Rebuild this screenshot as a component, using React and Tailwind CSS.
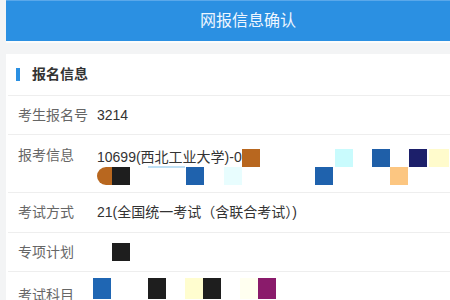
import React from "react";

const Block = ({ c, className = "" }) => (
    <span className={`inline-block w-[18px] h-[18px] ${c} ${className}`} />
);

const Row = ({ label, children, className = "" }) => (
    <div className={`flex items-center ml-[2px] pl-[10px] border-b border-[#eeeeee] ${className}`}>
        <div className="w-[79px] shrink-0 text-[14px] text-[#666]">{label}</div>
        <div className="flex-1 text-[14px] text-[#333]">{children}</div>
    </div>
);

const App = () => {
    return (
        <div
            className="w-[450px] h-[300px] overflow-hidden bg-[#f3f4f5]"
            style={{ fontFamily: '"Liberation Sans", "Noto Sans CJK SC", sans-serif' }}
        >
            <div className="ml-[6px] h-[41px] bg-[#2b90e2] border-t border-[#5aa8ea] flex items-center justify-center pl-[40px]">
                <span className="text-[16px] text-[#eef6ff]">网报信息确认</span>
            </div>
            <div className="ml-[6px] h-[2px] bg-[#fbfcfc]" />
            <div className="ml-[6px] mt-[11px] bg-white">
                <div className="h-[42px] flex items-center ml-[2px] pl-[8px] border-b border-[#eeeeee]">
                    <span className="w-[4px] h-[13px] bg-[#2b90e2] mr-[12px]" />
                    <span className="text-[14px] font-bold text-[#333]">报名信息</span>
                </div>
                <Row label="考生报名号" className="h-[39px]">3214</Row>
                <div className="flex items-start ml-[2px] pl-[10px] border-b border-[#eeeeee] h-[58px] pt-[11px]">
                    <div className="w-[79px] shrink-0 text-[14px] text-[#666] leading-[19px]">报考信息</div>
                    <div className="flex-1">
                        <div className="flex items-end h-[21px]">
                            <span className="relative text-[14px] text-[#333] leading-[19px]">
                                10699(西北工业大学)-0
                                <span className="absolute left-[51px] bottom-[-1px] w-[37px] h-[2px] bg-[#bfe0f5]" />
                            </span>
                            <Block c="bg-[#b8671f]" />
                            <span className="w-[75px]" />
                            <Block c="bg-[#c9fbfd]" />
                            <span className="w-[19px]" />
                            <Block c="bg-[#1f5fa8]" />
                            <span className="w-[19px]" />
                            <Block c="bg-[#1c1f6a]" />
                            <span className="w-[2px]" />
                            <span className="inline-block w-[20px] h-[18px] bg-[#fffbcc]" />
                        </div>
                        <div className="flex items-start h-[19px]">
                            <span className="inline-block w-[15px] h-[18px] bg-[#b8671f] rounded-l-full" />
                            <Block c="bg-[#1e1e1e]" />
                            <span className="w-[56px]" />
                            <Block c="bg-[#1f62ad]" />
                            <span className="w-[20px]" />
                            <Block c="bg-[#e8fdfe]" />
                            <span className="w-[73px]" />
                            <Block c="bg-[#1f62ad]" />
                            <span className="w-[57px]" />
                            <Block c="bg-[#fcc681]" />
                        </div>
                    </div>
                </div>
                <Row label="考试方式" className="h-[40px]">21(全国统一考试（含联合考试）)</Row>
                <Row label="专项计划" className="h-[39px]">
                    <span className="flex pl-[15px]">
                        <Block c="bg-[#1e1e1e]" />
                    </span>
                </Row>
                <div className="flex items-start ml-[2px] pl-[10px] h-[40px] pt-[6px]">
                    <div className="w-[79px] shrink-0 text-[14px] text-[#666] leading-[20px] pt-[7px]">考试科目</div>
                    <div className="flex -ml-[4px]">
                        <Block c="bg-[#1f66b3]" className="h-[21px]" />
                        <span className="w-[37px]" />
                        <Block c="bg-[#1e1e1e]" className="h-[21px]" />
                        <span className="w-[19px]" />
                        <Block c="bg-[#fffdcf]" className="h-[21px]" />
                        <Block c="bg-[#1e1e1e]" className="h-[21px]" />
                        <span className="w-[19px]" />
                        <Block c="bg-[#fffff0]" className="h-[21px]" />
                        <Block c="bg-[#8a1b6b]" className="h-[21px]" />
                    </div>
                </div>
            </div>
        </div>
    );
};

export default App;
